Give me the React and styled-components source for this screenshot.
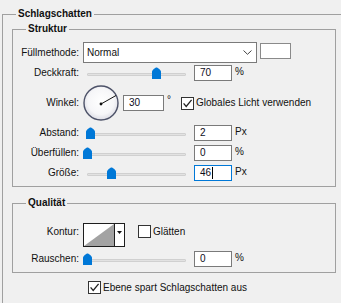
import React from "react";
import styled, { createGlobalStyle } from "styled-components";

const GlobalStyle = createGlobalStyle`
  html, body {
    margin: 0;
    padding: 0;
    background: #f0f0f0;
    overflow: hidden;
  }
  body {
    font-family: "Liberation Sans", Arial, sans-serif;
    font-size: 10px;
    color: #111;
  }
`;

const Dialog = styled.div`
  width: 341px;
  height: 303px;
  overflow: hidden;
  padding-top: 14px;
  box-sizing: border-box;
`;

const Group = styled.section`
  position: relative;
  box-sizing: border-box;
  border: 1px solid #a0a0a0;
  margin: ${({ $outer, $top }) => ($outer ? "0 0 0 2px" : `${$top || 0}px 0 0 0`)};
  width: ${({ $outer }) => ($outer ? "400px" : "324px")};
  height: ${({ $outer }) => ($outer ? "400px" : "auto")};
  padding: ${({ $pad }) => $pad};
`;

const GroupTitle = styled.h3`
  position: absolute;
  top: -7px;
  left: 13px;
  margin: 0;
  padding: 0 2px;
  background: #f0f0f0;
  font-size: 10px;
  font-weight: bold;
  line-height: 12px;
  color: #111;
`;

const Row = styled.div`
  display: flex;
  align-items: ${({ $align }) => $align || "center"};
  height: ${({ $h }) => $h}px;
`;

const FieldLabel = styled.span`
  width: 66px;
  margin-right: 4px;
  margin-top: ${({ $top }) => $top || 0}px;
  text-align: right;
  white-space: nowrap;
  line-height: 12px;
`;

const Select = styled.div`
  width: 174px;
  height: 21px;
  box-sizing: border-box;
  border: 1px solid #7a7a7a;
  background: #fff;
  display: flex;
  align-items: center;
  justify-content: space-between;
  padding: 0 4px 0 3px;
`;

const Swatch = styled.div`
  width: 31px;
  height: 16px;
  box-sizing: border-box;
  margin-left: 3px;
  align-self: flex-start;
  margin-top: 1px;
  border: 1px solid #8a8a8a;
  background: #fff;
`;

const Slider = styled.div`
  position: relative;
  width: 107px;
  height: 20px;
  margin-right: 4px;
`;

const Track = styled.div`
  margin: 10px 4px 0 4px;
  height: 3px;
  border-radius: 1px;
  background: #e2e2e2;
  border: 1px solid #d0d0d0;
  box-sizing: border-box;
`;

const ThumbShape = styled.svg`
  position: absolute;
  top: 4px;
  width: 9px;
  height: 12px;
`;

const Field = styled.div`
  width: ${({ $w }) => $w || 38}px;
  height: 16px;
  box-sizing: border-box;
  border: 1px solid ${({ $focus }) => ($focus ? "#0078d7" : "#7a7a7a")};
  background: #fff;
  padding-left: 5px;
  display: flex;
  align-items: center;
  line-height: 12px;
  color: #0d0d1a;
`;

const Caret = styled.span`
  width: 1px;
  height: 12px;
  margin-left: 1px;
  background: #000;
`;

const Unit = styled.span`
  align-self: flex-start;
  margin-top: ${({ $top }) => ($top === undefined ? 3 : $top)}px;
  margin-left: 3px;
  width: ${({ $w }) => ($w ? `${$w}px` : "auto")};
  line-height: 12px;
`;

const DialWrap = styled.svg`
  width: 36px;
  height: 36px;
  margin-right: 4px;
`;

const CheckLabel = styled.label`
  display: flex;
  align-items: center;
  margin-left: ${({ $left }) => $left || 0}px;
  margin-top: ${({ $top }) => $top || 0}px;
  align-self: ${({ $top }) => ($top ? "flex-start" : "center")};
  white-space: nowrap;
  line-height: 12px;
`;

const Box = styled.span`
  width: 13px;
  height: 13px;
  box-sizing: border-box;
  border: 1px solid #333;
  background: #fff;
  margin-right: 2px;
  display: flex;
`;

const ContourBox = styled.div`
  width: 42px;
  height: 24px;
  box-sizing: border-box;
  border: 1px solid #1e1e1e;
  background: #fff;
  display: flex;
`;

const ContourArrow = styled.div`
  flex: 1;
  border-left: 1px solid #1e1e1e;
  display: flex;
  justify-content: center;
  padding-top: 7px;
`;

const BottomRow = styled.div`
  margin: 8px 0 0 76px;
  display: flex;
`;

function Thumb({ pct }) {
  return (
    <ThumbShape viewBox="0 0 9 12" style={{ left: `${Math.round(pct * 0.985)}px` }}>
      <path d="M0 4.6 C0 3.2 3.2 0.4 4.5 0.4 C5.8 0.4 9 3.2 9 4.6 V12 H0 Z" fill="#0078d7" />
    </ThumbShape>
  );
}

function Checkbox({ checked, children, left, top }) {
  return (
    <CheckLabel $left={left} $top={top}>
      <Box>
        {checked && (
          <svg width="11" height="11" viewBox="0 0 11 11">
            <polyline points="1.6,5.4 4.2,8.4 9.6,1.8" fill="none" stroke="#222" strokeWidth="1.3" />
          </svg>
        )}
      </Box>
      {children}
    </CheckLabel>
  );
}

function SliderRow({ label, pct, value, unit, focus }) {
  return (
    <Row $h={20}>
      <FieldLabel>{label}</FieldLabel>
      <Slider>
        <Track />
        <Thumb pct={pct} />
      </Slider>
      <Field $focus={focus}>
        {value}
        {focus && <Caret />}
      </Field>
      <Unit>{unit}</Unit>
    </Row>
  );
}

function Dial() {
  return (
    <DialWrap viewBox="0 0 36 36">
      <defs>
        <radialGradient id="dialFill" cx="50%" cy="45%" r="55%">
          <stop offset="0%" stopColor="#ffffff" />
          <stop offset="70%" stopColor="#f6f6f8" />
          <stop offset="100%" stopColor="#dcdce4" />
        </radialGradient>
      </defs>
      <circle cx="18" cy="18" r="17" fill="url(#dialFill)" stroke="#4d5268" strokeWidth="1.4" />
      <line x1="18" y1="19" x2="33" y2="10.5" stroke="#111" strokeWidth="1" />
      <circle cx="18" cy="19" r="1.4" fill="#111" />
    </DialWrap>
  );
}

export default function App() {
  return (
    <Dialog>
      <GlobalStyle />
      <Group $outer $pad="0 0 0 9px">
        <GroupTitle>Schlagschatten</GroupTitle>

        <Group $top={14} $pad="12px 0 3px 0">
          <GroupTitle>Struktur</GroupTitle>
          <Row $h={21}>
            <FieldLabel>Füllmethode:</FieldLabel>
            <Select>
              Normal
              <svg width="9" height="5" viewBox="0 0 9 5">
                <polyline points="0.5,0.5 4.5,4.3 8.5,0.5" fill="none" stroke="#444" strokeWidth="1" />
              </svg>
            </Select>
            <Swatch />
          </Row>
          <SliderRow label="Deckkraft:" pct={70} value="70" unit="%" />
          <Row $h={40}>
            <FieldLabel>Winkel:</FieldLabel>
            <Dial />
            <Field $w={41}>30</Field>
            <Unit $top={11} $w={14}>°</Unit>
            <Checkbox checked>Globales Licht verwenden</Checkbox>
          </Row>
          <SliderRow label="Abstand:" pct={3} value="2" unit="Px" />
          <SliderRow label="Überfüllen:" pct={0} value="0" unit="%" />
          <SliderRow label="Größe:" pct={24.4} value="46" unit="Px" focus />
        </Group>

        <Group $top={16} $pad="19px 0 3px 0">
          <GroupTitle>Qualität</GroupTitle>
          <Row $h={26} $align="flex-start">
            <FieldLabel $top={3}>Kontur:</FieldLabel>
            <ContourBox>
              <svg width="30" height="22" viewBox="0 0 30 22">
                <polygon points="0,22 30,0 30,22" fill="#a3a3a3" />
              </svg>
              <ContourArrow>
                <svg width="5" height="3" viewBox="0 0 5 3">
                  <polygon points="0,0 5,0 2.5,3" fill="#111" />
                </svg>
              </ContourArrow>
            </ContourBox>
            <Checkbox left={13} top={2}>Glätten</Checkbox>
          </Row>
          <SliderRow label="Rauschen:" pct={0} value="0" unit="%" />
        </Group>

        <BottomRow>
          <Checkbox checked>Ebene spart Schlagschatten aus</Checkbox>
        </BottomRow>
      </Group>
    </Dialog>
  );
}
